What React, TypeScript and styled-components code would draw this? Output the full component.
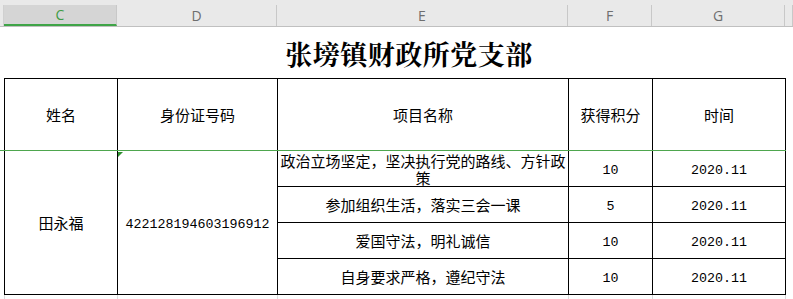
import React from "react"
import styled, { createGlobalStyle } from "styled-components"

interface Item {
  title: string
  score: string
  time: string
}

const items: Item[] = [
  { title: "政治立场坚定，坚决执行党的路线、方针政策", score: "10", time: "2020.11" },
  { title: "参加组织生活，落实三会一课", score: "5", time: "2020.11" },
  { title: "爱国守法，明礼诚信", score: "10", time: "2020.11" },
  { title: "自身要求严格，遵纪守法", score: "10", time: "2020.11" },
]

const columns = ["C", "D", "E", "F", "G", ""]

const GlobalStyle = createGlobalStyle`
  html, body {
    margin: 0;
    padding: 0;
    background: #ffffff;
  }
  body {
    font-family: "Noto Sans CJK SC", "Liberation Sans", sans-serif;
    color: #000000;
  }
`

const Sheet = styled.div`
  position: relative;
  width: 793px;
  height: 299px;
  overflow: hidden;
  background: #ffffff;
`

// Column letters strip
const ColumnBar = styled.div`
  display: grid;
  grid-template-columns: 4px 113px 160px 291px 84px 133px 1fr;
  box-sizing: border-box;
  height: 27px;
  padding-top: 5px;
  background: #e9e9e9;
  border-bottom: 1px solid #c0c0c0;
`

const Corner = styled.div`
  border-right: 1px solid #d0d0d0;
`

const ColumnHead = styled.div<{ $active?: boolean }>`
  display: flex;
  align-items: center;
  justify-content: center;
  box-sizing: border-box;
  border-right: 1px solid #c8c8c8;
  border-bottom: ${p => (p.$active ? "2px solid #3fa447" : "none")};
  background: ${p => (p.$active ? "#d5d5d5" : "transparent")};
  color: ${p => (p.$active ? "#3f9c45" : "#6e6e6e")};
  font-family: "Open Sans", "Liberation Sans", sans-serif;
  font-size: 14px;
`

const TitleRow = styled.div`
  display: flex;
  align-items: center;
  justify-content: center;
  height: 51px;
  padding-left: 25px;
  padding-top: 2px;
  box-sizing: border-box;
`

const Title = styled.h1`
  margin: 0;
  font-family: "Noto Serif CJK SC", "Noto Sans CJK SC", serif;
  font-size: 27px;
  font-weight: 700;
  letter-spacing: 0.5px;
  line-height: 1;
`

const Grid = styled.table`
  margin-left: 4px;
  border-collapse: collapse;
  table-layout: fixed;
  width: 801px;
`

const Row = styled.tr<{ $h: number }>`
  height: ${p => p.$h}px;
`

const Cell = styled.td<{ $plain?: boolean }>`
  position: relative;
  box-sizing: border-box;
  padding: 0 2px;
  border: ${p => (p.$plain ? "none" : "1px solid #000000")};
  text-align: center;
  vertical-align: middle;
  font-size: 15px;
  line-height: 17px;
  overflow: hidden;
`

const FillCell = styled.td<{ $last?: boolean }>`
  padding: 0;
  border-left: 1px solid #dadada;
  border-right: ${p => (p.$last ? "none" : "1px solid #dadada")};
`

const Mono = styled.span`
  font-family: "Liberation Mono", "DejaVu Sans Mono", monospace;
  font-size: 13.33px;
`

const Vertical = styled.span`
  display: inline-block;
  writing-mode: vertical-rl;
  font-size: 12px;
  margin-left: 6px;
  color: #000;
`

const ErrorMark = styled.span`
  position: absolute;
  top: 1px;
  left: 0;
  width: 0;
  height: 0;
  border-top: 5px solid #2f8f2f;
  border-right: 5px solid transparent;
`

const SelectionLine = styled.div`
  position: absolute;
  left: 0;
  top: 150px;
  width: 786px;
  height: 1px;
  background: #4ea64e;
`

export default function App() {
  return (
    <Sheet>
      <GlobalStyle />
      <ColumnBar>
        <Corner />
        {columns.map(c => (
          <ColumnHead key={c || "H"} $active={c === "C"}>
            {c}
          </ColumnHead>
        ))}
      </ColumnBar>

      <TitleRow>
        <Title>张塝镇财政所党支部</Title>
      </TitleRow>

      <Grid>
        <colgroup>
          <col style={{ width: 113 }} />
          <col style={{ width: 160 }} />
          <col style={{ width: 291 }} />
          <col style={{ width: 84 }} />
          <col style={{ width: 133 }} />
          <col style={{ width: 20 }} />
        </colgroup>
        <tbody>
          <Row $h={72}>
            <Cell>姓名</Cell>
            <Cell>身份证号码</Cell>
            <Cell>项目名称</Cell>
            <Cell>获得积分</Cell>
            <Cell>时间</Cell>
            <Cell $plain style={{ textAlign: "left", padding: 0 }}>
              <Vertical>备注</Vertical>
            </Cell>
          </Row>
          {items.map((item, i) => (
            <Row key={item.title} $h={36}>
              {i === 0 && (
                <>
                  <Cell rowSpan={4}>田永福</Cell>
                  <Cell rowSpan={4}>
                    <ErrorMark />
                    <Mono>422128194603196912</Mono>
                  </Cell>
                </>
              )}
              <Cell>{item.title}</Cell>
              <Cell>
                <Mono>{item.score}</Mono>
              </Cell>
              <Cell>
                <Mono>{item.time}</Mono>
              </Cell>
              <Cell $plain />
            </Row>
          ))}
          <Row $h={10}>
            <FillCell />
            <FillCell />
            <FillCell />
            <FillCell />
            <FillCell />
            <FillCell $last />
          </Row>
        </tbody>
      </Grid>

      <SelectionLine />
    </Sheet>
  )
}
